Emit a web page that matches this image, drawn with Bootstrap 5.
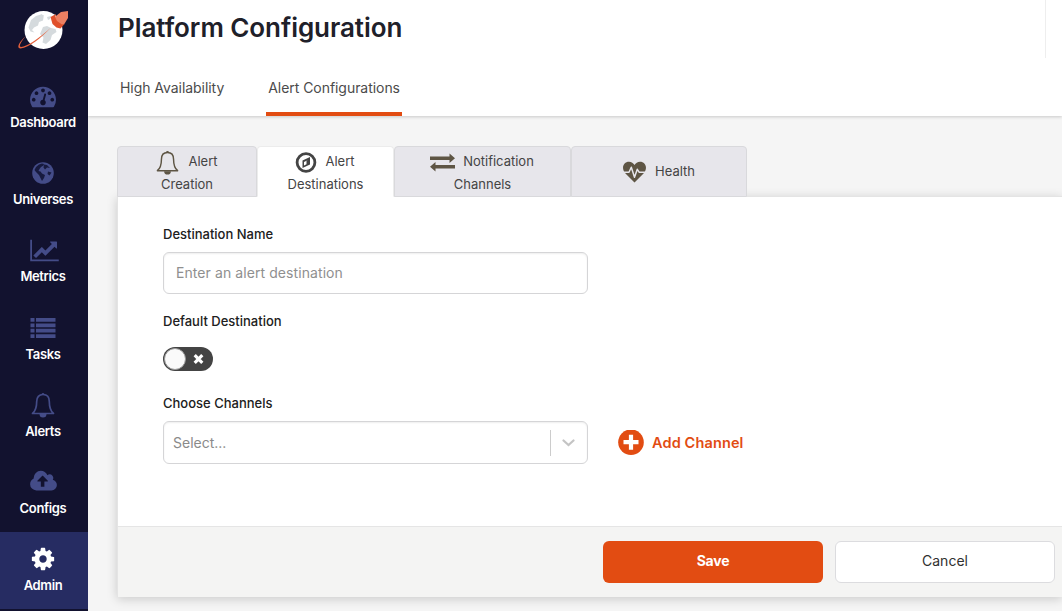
<!DOCTYPE html>
<html lang="en">
<head>
<meta charset="utf-8">
<meta name="viewport" content="width=device-width, initial-scale=1">
<title>Platform Configuration</title>
<link href="https://cdn.jsdelivr.net/npm/bootstrap@5.3.0/dist/css/bootstrap.min.css" rel="stylesheet">
<style>
body{font-family:Inter,"Liberation Sans",sans-serif;font-size:14px;color:#444;background:#f5f5f5;height:611px;overflow:hidden}
svg{display:block;flex:none}
.sidebar{width:88px;height:611px;background:#12122f}
.brand{height:69px;padding:8px 0 0 17px}
.side-link{height:77.2px;padding:12px 2px 0 0;color:#fff;font-weight:600;font-size:13px;line-height:22px;text-decoration:none;letter-spacing:-.35px}
.side-link .ico{height:30px;color:#444c88}
.side-link.active{background:#262c62;height:77px}
.side-link.active .ico{color:#fff}
.topbar{height:116px;background:#fff;box-shadow:0 1px 3px rgba(0,0,0,.18);padding-left:30px}
.topbar h1{font-size:26px;font-weight:600;line-height:32px;color:#202029;padding-top:12px;letter-spacing:-.06px}
.divider{width:1px;height:58px;background:#eee;margin-right:16px}
.main-tabs{height:58px;margin-left:-1px}
.main-tabs .nav-link{padding:0 3px;line-height:60px;height:58px;color:#4b4b4b;border-bottom:4px solid transparent;letter-spacing:-.05px}
.main-tabs .nav-link.active{border-color:#e24c12;padding:0 2px}
.content-area{padding:30px 0 0 29px}
.sub-tabs{height:50px;position:relative;z-index:1}
.sub-tabs .nav-link{height:51px;background:#e7e6eb;border:1px solid #d9d9dc;border-radius:4px 4px 0 0;color:#444;padding:3px 0 0;font-size:13px;line-height:23px;text-align:center}
.sub-tabs .two-line{height:23px}
.sub-tabs .nav-link.active{background:#fff;border-color:#ececec;border-bottom-color:#fff}
.sub-tabs .nav-link svg{color:#5e5544;margin-left:-1px}
.sub-tabs .nav-link.active svg{color:#444}
.panel{height:401px;background:#fff;border:1px solid #e4e4e4;border-right:0;box-shadow:0 2px 10px rgba(0,0,0,.18)}
.panel-form{height:329px;padding:27px 0 0 45px}
.form-label{font-size:13px;font-weight:500;line-height:20px;color:#202020;margin:0;display:block}
.field{width:425px;height:42px;border:1px solid #d5d5d7;border-radius:6px;box-shadow:inset 0 1px 2px rgba(0,0,0,.07);font-size:14px;background:#fff;padding:0 12px 2px;color:#444}
.field::placeholder{color:#8f8f8f;opacity:1;letter-spacing:.08px}
.switch{width:50px;height:24px;border-radius:12px;background:#444;padding:1px}
.knob{width:22px;height:22px;border-radius:50%;background:#fafafa;border:1px solid #999}
.select-text{color:#8a8a8a}
.sep{width:1px;height:26px;background:#ccc}
.add{color:#e24c12;font-weight:600;font-size:14.5px;text-decoration:none;gap:8px;letter-spacing:.13px}
.foot{height:71px;background:#f4f4f3;border-top:1px solid #e5e5e5;padding:14px 7px 0 0;gap:12px}
.foot .btn{width:220px;height:42px;font-size:14px;border-radius:6px;padding:0 0 3px}
.save{background:#e24c12;color:#fff;font-weight:700;letter-spacing:-.2px}
.cancel{background:#fff;border:1px solid #dcdcdf;color:#303030}
</style>
</head>
<body class="d-flex">
<nav class="sidebar d-flex flex-column flex-shrink-0">
  <div class="brand">
    <svg width="54" height="44" viewBox="17 8 54 44">
      <circle cx="43.500" cy="30" r="19" fill="#fff"/>
      <path d="M31 20l5-4 5-1.500 2.500 3-.5 3-4 1.500-1 3.500-4 2-2 2.500 2.500 2.500-4-1-2-4zM43 27l4-1 4 2 4.500 1 1 3-4.500 3-1.500 5-4.500 4-3.500-1.500 1-5-3.500-3.500z" fill="#d5dadd"/>
      <path d="M41 14l3 1.500-1 2.500-2.500-1zM47 17l4-1-1 3-2 1z" fill="#d5dadd"/>
      <path d="M25.500 36.500C18 43 16.500 48.500 20.500 48.500c9-1 20-10 30.500-21C40 37.500 27 47 21 47c-2.500 0-1-4 4.500-10.500z" fill="#e4603c"/>
      <path d="M54 17.500l7-5.500 7-1v7l-4 6.500-3 1-8-6z" fill="#ed8062"/>
      <path d="M50.500 17l5.500-3-1 3 2 4 5 3.500 2.500-.5-4 4.500-4-1-4-3.500z" fill="#e0502b"/>
    </svg>
  </div>
  <a class="side-link d-flex flex-column align-items-center" href="#"><span class="ico d-flex align-items-center"><svg width="26" height="26" viewBox="0 0 1792 1792" fill="currentColor"><path d="M384 1152q0-53-37.500-90.500t-90.500-37.500-90.500 37.500-37.500 90.500 37.500 90.500 90.500 37.500 90.500-37.500 37.500-90.500zm192-448q0-53-37.500-90.500t-90.500-37.500-90.500 37.500-37.500 90.500 37.500 90.500 90.500 37.500 90.500-37.500 37.500-90.500zm428 481l101-382q6-26-7.500-48.500t-38.500-29.500-48 6.500-30 39.500l-101 382q-60 5-107 43.500t-63 98.500q-20 77 20 146t117 89 146-20 89-117q16-60-6-117t-72-91zm660-33q0-53-37.500-90.500t-90.500-37.500-90.500 37.500-37.500 90.500 37.500 90.500 90.500 37.500 90.500-37.500 37.500-90.500zm-640-640q0-53-37.500-90.500t-90.500-37.500-90.500 37.500-37.500 90.500 37.500 90.500 90.500 37.500 90.500-37.500 37.500-90.500zm448 192q0-53-37.500-90.500t-90.500-37.500-90.500 37.500-37.500 90.500 37.500 90.500 90.500 37.500 90.500-37.500 37.500-90.500zm320 448q0 261-141 483-19 29-54 29h-1402q-35 0-54-29-141-221-141-483 0-182 71-348t191-286 286-191 348-71 348 71 286 191 191 286 71 348z"/></svg></span>Dashboard</a>
  <a class="side-link d-flex flex-column align-items-center" href="#"><span class="ico d-flex align-items-center"><svg width="22" height="22" viewBox="0 0 22 22"><circle cx="11" cy="11" r="10.800" fill="currentColor"/><path d="M4 5l3-2.500 3-1 2 .5-.5 1.500L9 5 7.500 7l-1 2 2 .5 1.500 2 3 1.500-1 3-2 3-1.500-3-1.500-3-3-3-1.500-2z" fill="#171a3e"/><path d="M12 2.500l3 .5 3 3-3-.5-2 2-1.500-2zM16 9.500l3.500 1-2 3-2-1.500z" fill="#171a3e"/></svg></span>Universes</a>
  <a class="side-link d-flex flex-column align-items-center" href="#"><span class="ico d-flex align-items-center"><svg width="29" height="25" viewBox="0 0 2048 1792" fill="currentColor" style="margin-left:2px"><path d="M2048 1536v128h-2048v-1536h128v1408h1920zm-128-1248v435q0 21-19.500 29.500t-35.500-7.500l-121-121-633 633q-10 10-23 10t-23-10l-233-233-416 416-192-192 585-585q10-10 23-10t23 10l233 233 464-464-121-121q-16-16-7.500-35.500t29.500-19.500h435q14 0 23 9t9 23z"/></svg></span>Metrics</a>
  <a class="side-link d-flex flex-column align-items-center" href="#"><span class="ico d-flex align-items-center"><svg width="26" height="20" viewBox="0 0 26 20" fill="currentColor"><path d="M.5 0h4v3.800h-4zm5.500 0h19.500v3.800H6zM.5 5.400h4v3.800h-4zm5.500 0h19.500v3.800H6zM.5 10.800h4v3.800h-4zm5.500 0h19.500v3.800H6zM.5 16.200h4v3.800h-4zm5.500 0h19.500v3.800H6z"/></svg></span>Tasks</a>
  <a class="side-link d-flex flex-column align-items-center" href="#"><span class="ico d-flex align-items-center"><svg width="24" height="26" viewBox="0 0 24 26"><path d="M1.500 21.500Q5.700 18 5.700 9.500C5.700 5 8 2.500 12 2.500s6.300 2.500 6.300 7q0 8.500 4.200 12z" fill="none" stroke="currentColor" stroke-width="1.700" stroke-linejoin="round"/><path d="M10.500 2.500a1.500 1.500 0 0 1 3 0zM8.500 22h7a3.500 3.500 0 0 1-7 0z" fill="currentColor"/></svg></span>Alerts</a>
  <a class="side-link d-flex flex-column align-items-center" href="#"><span class="ico d-flex align-items-center"><svg width="27" height="25" viewBox="0 0 1920 1792" fill="currentColor"><path d="M1280 864q0-14-9-23l-352-352q-9-9-23-9t-23 9l-351 351q-10 12-10 24 0 14 9 23t23 9h224v352q0 13 9.500 22.500t22.500 9.500h192q13 0 22.500-9.500t9.500-22.500v-352h224q13 0 22.500-9.500t9.500-22.500zm640 288q0 159-112.500 271.500t-271.500 112.500h-1088q-185 0-316.500-131.500t-131.500-316.500q0-130 70-240t188-165q-2-30-2-43 0-212 150-362t362-150q156 0 285.500 87t188.500 231q71-62 166-62 106 0 181 75t75 181q0 76-41 138 130 31 213.500 135.500t83.500 238.500z"/></svg></span>Configs</a>
  <a class="side-link active d-flex flex-column align-items-center" href="#"><span class="ico d-flex align-items-center"><svg width="26" height="26" viewBox="0 0 1792 1792" fill="currentColor"><path d="M1152 896q0-106-75-181t-181-75-181 75-75 181 75 181 181 75 181-75 75-181zm512-109v222q0 12-8 23t-20 13l-185 28q-19 54-39 91 35 50 107 138 10 12 10 25t-9 23q-27 37-99 108t-94 71q-12 0-26-9l-138-108q-44 23-91 38-16 136-29 186-7 28-36 28h-222q-14 0-24.500-8.500t-11.500-21.500l-28-184q-49-16-90-37l-141 107q-10 9-25 9-14 0-25-11-126-114-165-168-7-10-7-23 0-12 8-23 15-21 51-66.500t54-70.500q-27-50-41-99l-183-27q-13-2-21-12.500t-8-23.500v-222q0-12 8-23t19-13l186-28q14-46 39-92-40-57-107-138-10-12-10-24 0-10 9-23 26-36 98.500-107.500t94.500-71.500q13 0 26 10l138 107q44-23 91-38 16-136 29-186 7-28 36-28h222q14 0 24.500 8.500t11.500 21.500l28 184q49 16 90 37l142-107q9-9 24-9 13 0 25 10 129 119 165 170 7 8 7 22 0 12-8 23-15 21-51 66.500t-54 70.500q26 50 41 98l183 28q13 2 21 12.500t8 23.500z"/></svg></span>Admin</a>
</nav>
<main class="flex-grow-1">
  <header class="topbar">
    <div class="d-flex justify-content-between"><h1 class="m-0">Platform Configuration</h1><span class="divider"></span></div>
    <nav class="nav main-tabs">
      <a class="nav-link" href="#" style="margin-right:39px">High Availability</a>
      <a class="nav-link active" href="#">Alert Configurations</a>
    </nav>
  </header>
  <div class="content-area">
    <nav class="nav sub-tabs flex-nowrap">
      <a class="nav-link" href="#" style="width:140px"><span class="two-line d-flex justify-content-center gap-2"><svg width="25" height="25" viewBox="0 0 24 26"><path d="M1.500 21.500Q5.700 18 5.700 9.500C5.700 5 8 2.500 12 2.500s6.300 2.500 6.300 7q0 8.500 4.200 12z" fill="none" stroke="currentColor" stroke-width="1.500" stroke-linejoin="round"/><path d="M10.500 2.500a1.500 1.500 0 0 1 3 0zM8.500 22h7a3.500 3.500 0 0 1-7 0z" fill="currentColor"/></svg>Alert</span><span class="d-block">Creation</span></a>
      <a class="nav-link active" href="#" style="width:137px"><span class="two-line d-flex justify-content-center gap-2"><svg width="22" height="24" viewBox="0 0 22 24"><circle cx="11" cy="12.500" r="8.900" fill="none" stroke="currentColor" stroke-width="2.800"/><path d="M15 7v7.500L7.500 18v-7.500zM13 10l-4 2v3.500l2.500-1.200V11z" fill="currentColor" fill-rule="evenodd"/></svg>Alert</span><span class="d-block">Destinations</span></a>
      <a class="nav-link" href="#" style="width:177px"><span class="two-line d-flex justify-content-center gap-2"><svg width="25" height="24" viewBox="0 0 25 24" fill="currentColor"><path d="M0 6.500h19.500V3.500L25 8.300l-5.500 4.700v-3H0zM25 15H5.500v-3L0 16.800l5.500 4.700v-3H25z"/></svg>Notification</span><span class="d-block">Channels</span></a>
      <a class="nav-link" href="#" style="width:176px"><span class="d-flex justify-content-center align-items-center gap-2" style="height:43px"><svg width="25" height="22" viewBox="0 0 24 22"><path d="M12 21.500L2.500 12C-1.500 7 1 .8 6.500.8c2.500 0 4.300 1.400 5.500 3.100C13.200 2.200 15 .8 17.500.8c5.500 0 8 6.200 4 11.200z" fill="currentColor"/><path d="M0 11.300h6.500l2.300-5 3.200 10 2.800-8 2 3H24" fill="none" stroke="#e7e6eb" stroke-width="1.500" stroke-linejoin="round"/></svg>Health</span></a>
    </nav>
    <section class="panel">
      <form class="panel-form">
        <label class="form-label" for="dest">Destination Name</label>
        <input id="dest" class="field d-block" style="margin-top:8px" placeholder="Enter an alert destination">
        <span class="form-label" style="margin-top:17px">Default Destination</span>
        <div class="switch d-flex align-items-center" style="margin-top:16px"><span class="knob"></span><svg style="margin-left:7px" width="11" height="10" viewBox="0 0 11 10"><path d="M1.700 1.200l7.600 7.600m0-7.600l-7.600 7.600" stroke="#fff" stroke-width="3.200"/></svg></div>
        <span class="form-label" style="margin-top:22px">Choose Channels</span>
        <div class="d-flex align-items-center" style="margin-top:8px">
          <div class="field d-flex align-items-center" style="height:43px;padding:0 12px 0 9px"><span class="select-text me-auto">Select...</span><span class="sep"></span><svg style="margin-left:11px" width="13" height="8" viewBox="0 0 13 8"><path d="M1.500 1.500l5 4.500 5-4.500" fill="none" stroke="#c4c4c4" stroke-width="2.200" stroke-linecap="round"/></svg></div>
          <a class="add d-flex align-items-center" style="margin-left:30px" href="#"><svg width="26" height="26" viewBox="0 0 26 26"><circle cx="13" cy="12.200" r="12.800" fill="#e24c12"/><path d="M13 4.700v15M5.500 12.200h15" stroke="#fff" stroke-width="4.200"/></svg>Add Channel</a>
        </div>
      </form>
      <div class="foot d-flex justify-content-end"><button class="btn save" type="button">Save</button><button class="btn cancel" type="button">Cancel</button></div>
    </section>
  </div>
</main>
<script src="https://cdn.jsdelivr.net/npm/bootstrap@5.3.0/dist/js/bootstrap.bundle.min.js"></script>
</body>
</html>
